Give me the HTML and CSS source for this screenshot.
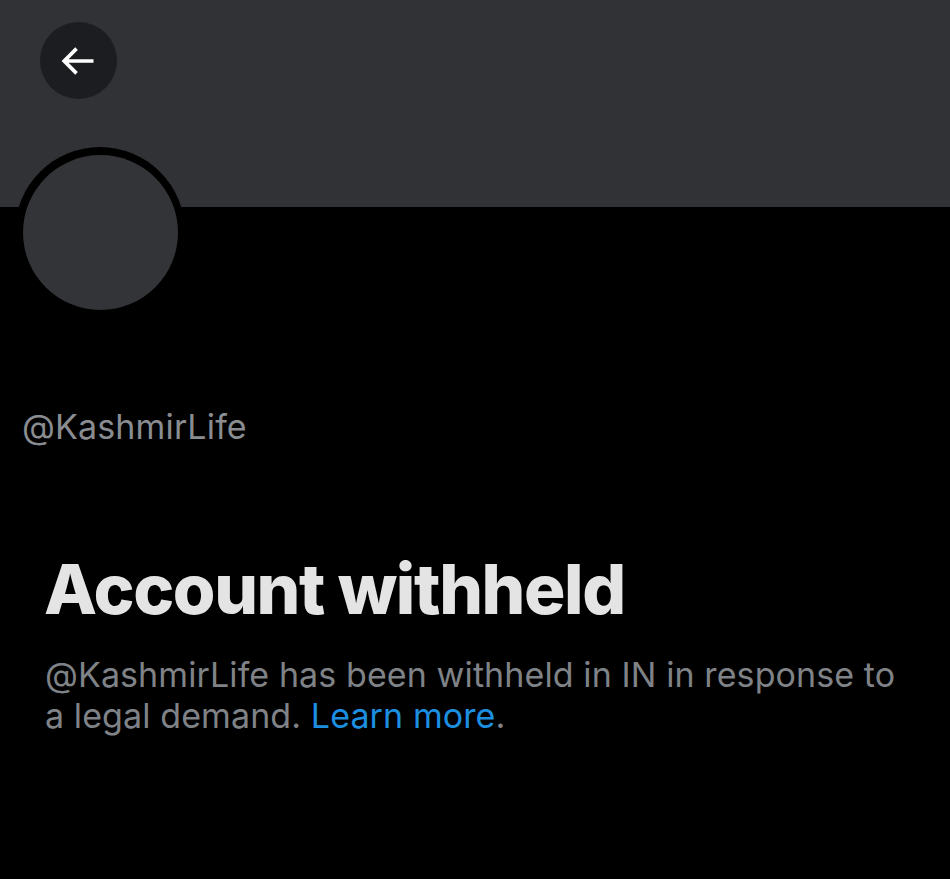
FILE: index.html
```html
<!DOCTYPE html>
<html lang="en">
<head>
<meta charset="utf-8">
<title>@KashmirLife</title>
<link rel="stylesheet" href="styles.css">
</head>
<body>
<div class="page">
  <header class="banner">
    <button class="back" aria-label="Back">
      <svg viewBox="0 0 24 24" width="44" height="44" aria-hidden="true"><path d="M7.414 13l5.043 5.04-1.414 1.42L3.586 12l7.457-7.46 1.414 1.42L7.414 11H21v2H7.414z" fill="#fff"/></svg>
    </button>
  </header>
  <div class="avatar-ring"><div class="avatar"></div></div>
  <div class="handle">@KashmirLife</div>
  <h1 class="title">Account withheld</h1>
  <p class="desc">@KashmirLife has been withheld in IN in response to a legal demand. <a class="link" href="#">Learn more</a>.</p>
</div>
</body>
</html>
```
FILE: styles.css
```css
html, body {
  margin: 0;
  padding: 0;
  background: #000;
}
.page {
  width: 950px;
  min-height: 879px;
  background: #000;
  font-family: "Inter", "Liberation Sans", sans-serif;
  overflow: hidden;
}
.banner {
  height: 207px;
  background: #303236;
  padding: 22px 0 0 40px;
  box-sizing: border-box;
}
.back {
  width: 77px;
  height: 77px;
  border-radius: 50%;
  border: 0;
  padding: 0;
  background: #1c1d20;
  display: flex;
  align-items: center;
  justify-content: center;
}
.back svg {
  display: block;
  margin-left: -4px;
}
.avatar-ring {
  width: 170px;
  height: 170px;
  border-radius: 50%;
  background: #000;
  margin: -60px 0 0 15px;
  display: flex;
  align-items: center;
  justify-content: center;
}
.avatar {
  width: 155px;
  height: 155px;
  border-radius: 50%;
  background: #323438;
}
.handle {
  margin: 90px 0 0 22px;
  font-size: 34px;
  line-height: 40px;
  letter-spacing: 0.15px;
  color: #898c90;
}
.title {
  margin: 102px 0 0 44px;
  font-size: 69px;
  line-height: 80px;
  font-weight: 800;
  color: #e4e4e4;
  letter-spacing: -1.4px;
}
.desc {
  margin: 25px 0 0 45px;
  max-width: 860px;
  font-size: 34px;
  line-height: 41px;
  letter-spacing: 0.1px;
  color: #7f8286;
}
.link {
  color: #1d8fe0;
  text-decoration: none;
}
```
